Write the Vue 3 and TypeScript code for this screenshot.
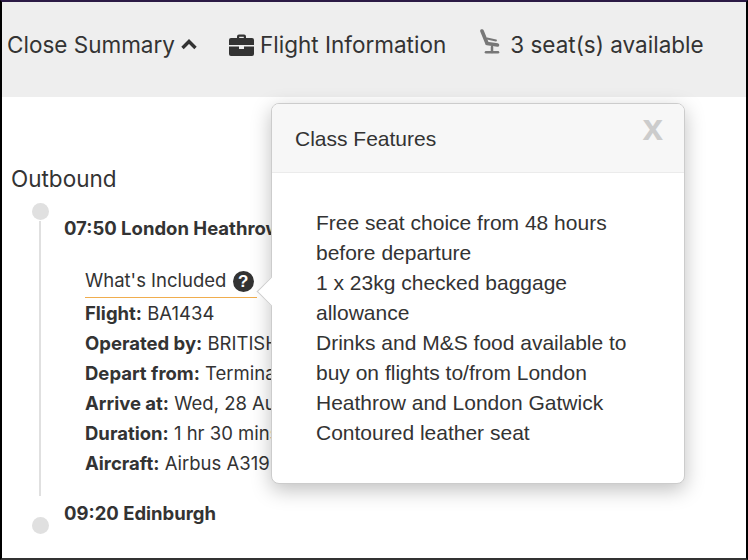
<script setup lang="ts">
const details: { label: string; value: string }[] = [
  { label: 'Flight:', value: 'BA1434' },
  { label: 'Operated by:', value: 'BRITISH AIRWAYS' },
  { label: 'Depart from:', value: 'Terminal 5' },
  { label: 'Arrive at:', value: 'Wed, 28 August' },
  { label: 'Duration:', value: '1 hr 30 mins' },
  { label: 'Aircraft:', value: 'Airbus A319' },
]
const features: string[] = [
  'Free seat choice from 48 hours before departure',
  '1 x 23kg checked baggage allowance',
  'Drinks and M&S food available to buy on flights to/from London Heathrow and London Gatwick',
  'Contoured leather seat',
]
</script>

<template>
  <div class="frame">
    <header class="bar">
      <span class="item first">Close Summary
        <svg class="chev" viewBox="0 0 16 11" width="16" height="11"><path d="M1.5 9 8 2.5 14.500 9" fill="none" stroke="#333" stroke-width="3.400" /></svg>
      </span>
      <span class="item brief">
        <svg viewBox="0 0 25 22" width="25" height="22"><path fill="#333" d="M8 4V2.500A2 2 0 0 1 10 .5h5a2 2 0 0 1 2 2V4h6a2 2 0 0 1 2 2v5H0V6a2 2 0 0 1 2-2zm2.200 0h4.600V2.700h-4.600zM0 12.500h10V15h5v-2.500h10V20a2 2 0 0 1-2 2H2a2 2 0 0 1-2-2z" /></svg>
        Flight Information
      </span>
      <span class="item seat">
        <svg class="seat-icon" viewBox="0 0 22 25" width="22" height="25">
          <g fill="none" stroke="#777" stroke-linecap="round">
            <path d="M3 2 7.500 13" stroke-width="3.600" />
            <path d="M8 14.500 18.500 16" stroke-width="3.600" />
            <path d="M8 9.500 17 11.500" stroke-width="1.800" />
            <path d="M13 18v5" stroke-width="2.500" />
            <path d="M7 23.200H19" stroke-width="2.600" />
          </g>
        </svg>
        3 seat(s) available
      </span>
    </header>

    <main class="content">
      <h2 class="heading">Outbound</h2>
      <div class="timeline">
        <div class="stop-title">07:50 London Heathrow</div>
        <div class="included">What's Included <span class="help">?</span></div>
        <div class="detail" v-for="d in details" :key="d.label"><b>{{ d.label }}</b> {{ d.value }}</div>
        <div class="stop-title last">09:20 Edinburgh</div>
      </div>
    </main>

    <aside class="popover">
      <div class="pop-head">
        <span>Class Features</span>
        <span class="close">x</span>
      </div>
      <div class="pop-body">
        <div v-for="f in features" :key="f">{{ f }}</div>
      </div>
      <i class="arrow"></i>
    </aside>
  </div>
</template>

<style>
html, body { margin: 0; background: #fff; }
</style>

<style scoped>
.frame {
  position: relative;
  box-sizing: border-box;
  width: 748px;
  height: 560px;
  overflow: hidden;
  background: #fff;
  border: 2px solid #000;
  border-top-color: #2b1a45;
  border-bottom-color: #333;
  color: #333;
  font-family: "Inter", "Liberation Sans", sans-serif;
}
.bar {
  display: flex;
  align-items: center;
  box-sizing: border-box;
  height: 95px;
  padding: 0 0 10px 5px;
  background: #eee;
  font-size: 22.500px;
}
.item { display: inline-flex; align-items: center; white-space: nowrap; }
.chev { margin-left: 6px; }
.brief { margin-left: 32px; }
.brief svg { margin-right: 6px; }
.seat { margin-left: 33px; }
.seat-icon { margin-right: 9px; position: relative; top: -3px; }
.content { padding: 0 0 0 9px; }
.heading { margin: 67px 0 0; font-size: 22.500px; font-weight: 400; line-height: 30px; }
.timeline { position: relative; margin: 19px 0 0 21px; height: 320px; padding-left: 32px; }
.timeline::before {
  content: ""; position: absolute; left: 7px; top: 8px; width: 2px; height: 275px; background: #e0e0e0;
}
.stop-title { position: relative; font-weight: 700; font-size: 18.500px; line-height: 30px; height: 30px; margin-top: 10px; white-space: nowrap; width: 207px; }
.stop-title::before {
  content: ""; position: absolute; left: -32px; top: -10px; width: 17px; height: 17px; border-radius: 50%; background: #e0e0e0;
}
.stop-title.last { margin-top: 20px; }
.stop-title.last::before { top: 19px; }
.included {
  display: inline-block; box-sizing: border-box; width: 172px; margin: 22px 0 0 21px; padding-bottom: 2px;
  font-size: 18.500px; line-height: 30px; border-bottom: 1px solid #f0ad4e; white-space: nowrap;
}
.help {
  display: inline-block; width: 21px; height: 21px; border-radius: 50%; background: #333; color: #fff;
  font: 700 17px/21px "Liberation Sans", sans-serif; text-align: center; vertical-align: 0; margin-left: 1px;
}
.detail { margin-left: 21px; width: 186px; overflow: hidden; font-size: 18.500px; line-height: 30px; white-space: nowrap; }
.popover {
  position: absolute;
  left: 269px;
  top: 101px;
  width: 414px;
  height: 381px;
  box-sizing: border-box;
  background: #fff;
  border: 1px solid #ccc;
  border-radius: 8px;
  box-shadow: 0 6px 20px rgba(0, 0, 0, .25);
  font-family: "Liberation Sans", Arial, sans-serif;
  font-size: 21px;
  color: #333;
}
.pop-head {
  display: flex; justify-content: space-between; align-items: flex-start;
  height: 69px; box-sizing: border-box; padding: 23px 21px 0 23px; line-height: 24px;
  background: #f7f7f7; border-bottom: 1px solid #ebebeb; border-radius: 7px 7px 0 0;
}
.close { font-weight: 700; font-size: 37px; line-height: 20px; color: #ccc; margin-top: -9px; }
.pop-body { padding: 35px 50px 0 44px; line-height: 30px; }
.arrow {
  position: absolute; left: -11px; top: 177px; width: 20px; height: 20px; background: #fff;
  border-left: 1px solid #ccc; border-bottom: 1px solid #ccc; transform: rotate(45deg);
}
</style>
